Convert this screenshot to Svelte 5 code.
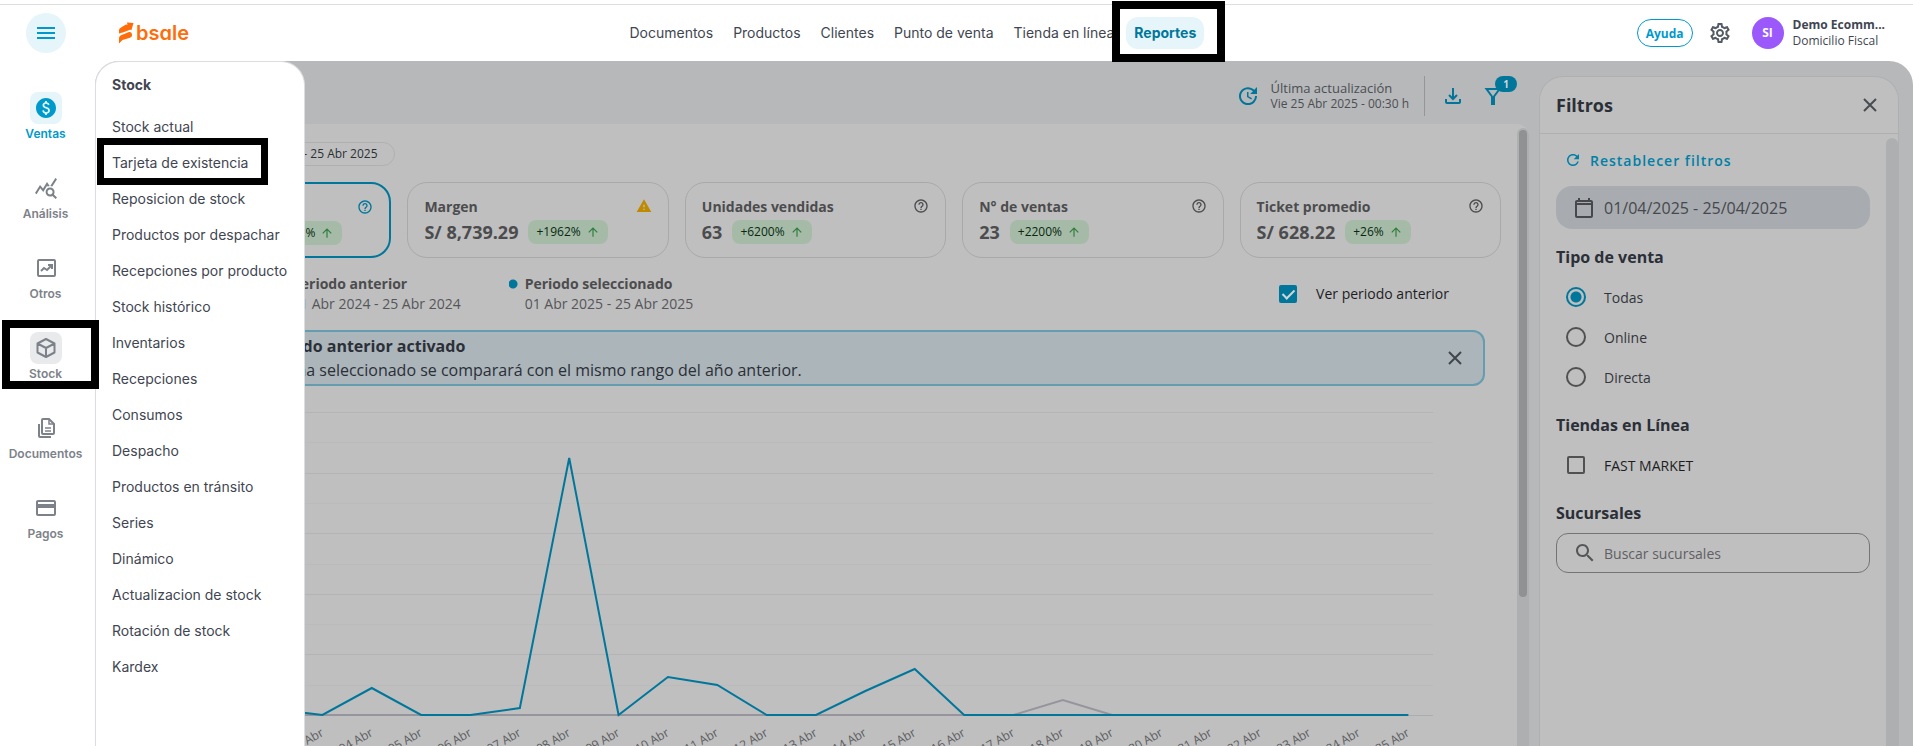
<script lang="ts">
	const navLinks = ['Documentos', 'Productos', 'Clientes', 'Punto de venta', 'Tienda en línea', 'Reportes']

	const sections = ['Ventas', 'Análisis', 'Otros', 'Stock', 'Documentos', 'Pagos']

	const stockLinks = [
		'Stock actual',
		'Tarjeta de existencia',
		'Reposicion de stock',
		'Productos por despachar',
		'Recepciones por producto',
		'Stock histórico',
		'Inventarios',
		'Recepciones',
		'Consumos',
		'Despacho',
		'Productos en tránsito',
		'Series',
		'Dinámico',
		'Actualizacion de stock',
		'Rotación de stock',
		'Kardex',
	]

	const cards = [
		{ title: 'Ventas', value: 'S/ 14,449', change: '+1962%', active: true },
		{ title: 'Margen', value: 'S/ 8,739.29', change: '+1962%', warn: true },
		{ title: 'Unidades vendidas', value: '63', change: '+6200%' },
		{ title: 'N° de ventas', value: '23', change: '+2200%' },
		{ title: 'Ticket promedio', value: 'S/ 628.22', change: '+26%' },
	]

	let saleType = $state('Todas')
	let showPrevious = $state(true)

	// chart geometry: values are pixels above the axis
	const current = [0, 6, 0, 27, 0, 0, 7, 257, 0, 38, 30, 0, 0, 24, 46, 0, 0, 0, 0, 0, 0, 0, 0, 0, 0]
	const previous = current.map((_, i) => (i === 17 ? 15 : 0))
	const AXIS_Y = 329
	const PLOT_LEFT = 69
	const PLOT_RIGHT = 68
	const gridLines = Array.from({ length: 10 }, (_, i) => Math.round(26 + i * 30.3))

	let chartWidth = $state(0)
	const step = $derived(Math.max(0, chartWidth - PLOT_LEFT - PLOT_RIGHT) / current.length)

	function px(i: number) {
		return PLOT_LEFT + step * (i + 0.5)
	}

	function points(values: number[]) {
		return values.map((v, i) => `${px(i)},${AXIS_Y - v}`).join(' ')
	}

	function dayLabel(i: number) {
		return `${String(i + 1).padStart(2, '0')} Abr`
	}
</script>

<div class="app">
	<header>
		<div class="brand">
			<button class="burger" aria-label="Menú">
				<svg width="18" height="12" viewBox="0 0 18 12"><path d="M0 1h18M0 6h18M0 11h18" stroke="currentColor" stroke-width="2" /></svg>
			</button>
			<a class="logo" href="#inicio">
				<svg width="15" height="22" viewBox="0 0 15 22" fill="currentColor">
					<path d="M7 2.5 8.5 2.8 8 .5 14.5 1 12.500 8 11 7.800 4.500 10.300 0 11.500V8Q0 6.500 2 5.500Z" />
					<path d="M1.500 13.500 10 10Q13 9.500 13 12.500V13.500Q13 15 11 15.800L3.500 18 0 21.500V16Q0 14.500 1.500 13.500Z" />
				</svg>
				<span>bsale</span>
			</a>
		</div>
		<nav class="topnav">
			{#each navLinks as link}
				<a href="#{link}" class:current={link === 'Reportes'}>
					{link}
					{#if link === 'Reportes'}<i class="mark"></i>{/if}
				</a>
			{/each}
		</nav>
		<div class="account">
			<button class="help">Ayuda</button>
			<button class="gear" aria-label="Configuración">
				<svg width="24" height="24" viewBox="0 0 24 24" fill="currentColor"><path d="M19.43 12.98c.04-.32.07-.64.07-.98 0-.34-.03-.66-.07-.98l2.110-1.650c.19-.15.24-.42.12-.64l-2-3.460c-.09-.16-.26-.25-.44-.25-.06 0-.12.01-.17.03l-2.490 1c-.52-.4-1.080-.73-1.690-.98l-.38-2.650C14.460 2.180 14.250 2 14 2h-4c-.25 0-.46.18-.49.42l-.38 2.650c-.61.25-1.170.59-1.690.98l-2.490-1c-.06-.02-.12-.03-.18-.03-.17 0-.34.09-.43.25l-2 3.460c-.13.22-.07.49.12.64l2.110 1.650c-.04.32-.07.65-.07.98 0 .33.03.66.07.98l-2.110 1.650c-.19.15-.24.42-.12.64l2 3.460c.09.16.26.25.44.25.06 0 .12-.01.17-.03l2.490-1c.52.4 1.080.73 1.690.98l.38 2.650c.03.24.24.42.49.42h4c.25 0 .46-.18.49-.42l.38-2.650c.61-.25 1.170-.59 1.690-.98l2.490 1c.06.02.12.03.18.03.17 0 .34-.09.43-.25l2-3.460c.12-.22.07-.49-.12-.64l-2.110-1.650zm-1.980-1.710c.04.31.05.52.05.73 0 .21-.02.43-.05.73l-.14 1.130.89.7 1.080.84-.7 1.210-1.270-.51-1.040-.42-.9.68c-.43.32-.84.56-1.250.73l-1.060.43-.16 1.130-.2 1.350h-1.400l-.19-1.350-.16-1.130-1.060-.43c-.43-.18-.83-.41-1.230-.71l-.91-.7-1.060.43-1.270.51-.7-1.210 1.080-.84.89-.7-.14-1.130c-.03-.31-.05-.54-.05-.74s.02-.43.05-.73l.14-1.130-.89-.7-1.080-.84.7-1.210 1.270.51 1.040.42.9-.68c.43-.32.84-.56 1.250-.73l1.060-.43.16-1.130.2-1.350h1.390l.19 1.350.16 1.130 1.060.43c.43.18.83.41 1.230.71l.91.7 1.060-.43 1.270-.51.7 1.210-1.070.85-.89.7.14 1.130zM12 8c-2.210 0-4 1.790-4 4s1.790 4 4 4 4-1.790 4-4-1.790-4-4-4zm0 6c-1.100 0-2-.9-2-2s.9-2 2-2 2 .9 2 2-.9 2-2 2z" /></svg>
			</button>
			<div class="user">
				<span class="avatar">SI</span>
				<div>
					<strong>Demo Ecomm...</strong>
					<span>Domicilio Fiscal</span>
				</div>
			</div>
		</div>
	</header>

	<div class="body">
		<nav class="sidebar">
			{#each sections as name}
				<a href="#{name}" class:on={name === 'Ventas'} class:open={name === 'Stock'}>
					<span class="tile">
						<svg width="24" height="24" viewBox="0 0 24 24" fill="currentColor">
							{#if name === 'Ventas'}
								<path d="M12 2C6.480 2 2 6.480 2 12s4.480 10 10 10 10-4.480 10-10S17.520 2 12 2zm.88 15.760V19h-1.750v-1.290c-.74-.18-2.390-.77-3.020-2.960l1.650-.67c.06.22.58 2.090 2.400 2.090.93 0 1.980-.48 1.980-1.610 0-.96-.7-1.460-2.280-2.030-1.100-.39-3.350-1.030-3.350-3.310 0-.1.01-2.400 2.620-2.960V5h1.750v1.240c1.840.32 2.510 1.790 2.660 2.230l-1.580.67c-.11-.35-.59-1.340-1.900-1.340-.7 0-1.810.37-1.810 1.390 0 .95.86 1.310 2.640 1.900 2.400.83 3.010 2.050 3.010 3.450 0 2.630-2.500 3.130-3.020 3.220z" />
							{:else if name === 'Análisis'}
								<path d="M19.880 18.470c.44-.7.7-1.510.7-2.390 0-2.490-2.010-4.500-4.500-4.500s-4.500 2.010-4.500 4.500 2.010 4.500 4.490 4.500c.88 0 1.700-.26 2.390-.7L21.580 23 23 21.580l-3.120-3.110zm-3.800.11c-1.380 0-2.500-1.120-2.500-2.500s1.120-2.500 2.500-2.500 2.500 1.120 2.500 2.500-1.120 2.500-2.500 2.500zm-.36-8.500c-.74.02-1.450.18-2.100.45l-.55-.83-3.800 6.180-3.010-3.520-3.630 5.810L1 17l5-8 3 3.500L13 6l2.720 4.080zm2.590.5c-.64-.28-1.330-.45-2.050-.49L21.380 2 23 3.180l-4.690 7.400z" />
							{:else if name === 'Otros'}
								<g fill="none" stroke="currentColor" stroke-width="2">
									<rect x="4" y="4" width="17" height="16" rx="1" />
									<path d="m7 15 3-3 3 2 4-4" />
									<path d="M14 9h4v4" />
								</g>
							{:else if name === 'Stock'}
								<path d="M12 3 20.500 7.500V16.500L12 21 3.500 16.500V7.500ZM3.500 7.500 12 12 20.500 7.500M12 12V21" fill="none" stroke="currentColor" stroke-width="2" stroke-linejoin="round" />
							{:else if name === 'Documentos'}
								<g fill="none" stroke="currentColor" stroke-width="2">
									<path d="M9 3h6l5 5v9q0 1-1 1H9q-1 0-1-1V4q0-1 1-1Z" />
									<path d="M15 3v5h5M11 12h6M11 15h6" stroke-width="1.500" />
									<path d="M5 8v12q0 1 1 1h11" />
								</g>
							{:else}
								<path d="M20 4H4c-1.110 0-1.990.89-1.990 2L2 18c0 1.110.89 2 2 2h16c1.110 0 2-.89 2-2V6c0-1.110-.89-2-2-2zm0 14H4v-6h16v6zm0-10H4V6h16v2z" />
							{/if}
						</svg>
					</span>
					{name}
					{#if name === 'Stock'}<i class="mark"></i>{/if}
				</a>
			{/each}
		</nav>

		<div class="stage">
			<main>
				<div class="toolbar">
					<svg width="24" height="24" viewBox="0 0 24 24" fill="#00769b"><path d="M21 10.120h-6.780l2.740-2.820c-2.730-2.700-7.150-2.800-9.880-.1-2.730 2.710-2.730 7.080 0 9.790s7.150 2.710 9.880 0C18.320 15.650 19 14.080 19 12.100h2c0 1.980-.88 4.550-2.640 6.290-3.510 3.480-9.210 3.480-12.720 0-3.500-3.470-3.530-9.110-.02-12.580s9.140-3.470 12.650 0L21 3v7.120zM12.500 8v4.250l3.500 2.080-.72 1.210L11 13V8h1.500z" /></svg>
					<div class="updated">
						<span>Última actualización</span>
						<small>Vie 25 Abr 2025 - 00:30 h</small>
					</div>
					<div class="tools">
						<button aria-label="Descargar">
							<svg width="24" height="24" viewBox="0 0 24 24" fill="none" stroke="currentColor" stroke-width="2"><path d="M12 4v11M8 11l4 4 4-4M5 15v3q0 1 1 1h12q1 0 1-1v-3" /></svg>
						</button>
						<button aria-label="Filtros">
							<svg width="24" height="24" viewBox="0 0 24 24" fill="none" stroke="currentColor" stroke-width="2"><path d="M5.500 5h13L13 12.500V20h-2V12.500Z" /></svg>
							<span class="count">1</span>
						</button>
					</div>
				</div>

				<div class="sheet">
					<div class="report">
						<span class="range">Fecha: 01 Abr 2025 - 25 Abr 2025</span>

						<div class="cards">
							{#each cards as card}
								<section class="card" class:active={card.active}>
									<div class="card-top">
										<h3>{card.title}</h3>
										{#if card.warn}
											<svg width="16" height="16" viewBox="0 0 24 24" fill="#bf8a00"><path d="M1 21h22L12 2 1 21zm12-3h-2v-2h2v2zm0-4h-2v-4h2v4z" /></svg>
										{:else}
											<svg width="16" height="16" viewBox="0 0 24 24" fill="currentColor"><path d="M11 18h2v-2h-2v2zm1-16C6.480 2 2 6.480 2 12s4.480 10 10 10 10-4.480 10-10S17.520 2 12 2zm0 18c-4.410 0-8-3.590-8-8s3.590-8 8-8 8 3.590 8 8-3.590 8-8 8zm0-14c-2.210 0-4 1.790-4 4h2c0-1.100.9-2 2-2s2 .9 2 2c0 2-3 1.750-3 5h2c0-2.250 3-2.500 3-5 0-2.210-1.790-4-4-4z" /></svg>
										{/if}
									</div>
									<div class="card-value">
										<strong>{card.value}</strong>
										<span class="change">
											{card.change}
											<svg width="14" height="14" viewBox="0 0 24 24" fill="#2f7d3a"><path d="M4 12l1.410 1.410L11 7.830V20h2V7.830l5.580 5.590L20 12l-8-8-8 8z" /></svg>
										</span>
									</div>
								</section>
							{/each}
						</div>

						<div class="legend">
							<div class="period previous">
								<strong>Periodo anterior</strong>
								<span>01 Abr 2024 - 25 Abr 2024</span>
							</div>
							<div class="period">
								<strong>Periodo seleccionado</strong>
								<span>01 Abr 2025 - 25 Abr 2025</span>
							</div>
							<label class="toggle">
								<input type="checkbox" bind:checked={showPrevious} />
								Ver periodo anterior
							</label>
						</div>

						<div class="notice">
							<div>
								<strong>Periodo anterior activado</strong>
								<p>La fecha seleccionado se comparará con el mismo rango del año anterior.</p>
							</div>
							<button aria-label="Cerrar aviso">
								<svg width="16" height="16" viewBox="0 0 16 16"><path d="m2 2 12 12M14 2 2 14" stroke="currentColor" stroke-width="2" /></svg>
							</button>
						</div>

						<div class="chart" bind:clientWidth={chartWidth}>
							<svg width={chartWidth} height="400">
								{#each gridLines as y, i}
									<line x1={PLOT_LEFT} x2={chartWidth - PLOT_RIGHT} y1={y + 0.5} y2={y + 0.5} stroke={i % 2 ? '#bbbbbc' : '#b4b4b6'} />
								{/each}
								<line x1={PLOT_LEFT} x2={chartWidth - PLOT_RIGHT} y1={AXIS_Y + 0.5} y2={AXIS_Y + 0.5} stroke="#adadb0" />
								{#if showPrevious}
									<polyline points={points(previous)} fill="none" stroke="#96949d" stroke-width="2" />
								{/if}
								<polyline points={points(current)} fill="none" stroke="#00769b" stroke-width="2" />
								{#each current as _, i}
									<text transform="translate({px(i) + 2} {AXIS_Y + 20}) rotate(-30)" text-anchor="end">{dayLabel(i)}</text>
								{/each}
							</svg>
						</div>
					</div>
					<div class="track"><div class="thumb"></div></div>
				</div>
			</main>

			<aside>
				<div class="filters-head">
					<h2>Filtros</h2>
					<button aria-label="Cerrar filtros">
						<svg width="16" height="16" viewBox="0 0 16 16"><path d="m2 2 12 12M14 2 2 14" stroke="currentColor" stroke-width="2" /></svg>
					</button>
				</div>
				<div class="filters-body">
					<form>
						<button type="button" class="reset">
							<svg width="18" height="18" viewBox="0 0 24 24" fill="currentColor"><path d="M17.650 6.350C16.200 4.900 14.210 4 12 4c-4.420 0-7.990 3.580-7.990 8s3.570 8 7.990 8c3.730 0 6.840-2.550 7.730-6h-2.080c-.82 2.330-3.040 4-5.650 4-3.310 0-6-2.690-6-6s2.690-6 6-6c1.660 0 3.140.69 4.220 1.780L13 11h7V4l-2.350 2.350z" /></svg>
							Restablecer filtros
						</button>
						<button type="button" class="dates">
							<svg width="24" height="24" viewBox="0 0 24 24" fill="currentColor"><path d="M19 4h-1V2h-2v2H8V2H6v2H5c-1.110 0-1.990.9-1.990 2L3 20c0 1.100.89 2 2 2h14c1.100 0 2-.9 2-2V6c0-1.100-.9-2-2-2zm0 16H5V9h14v11zm0-13H5V6h14v1z" /></svg>
							01/04/2025 - 25/04/2025
						</button>

						<fieldset>
							<legend>Tipo de venta</legend>
							{#each ['Todas', 'Online', 'Directa'] as type}
								<label>
									<input type="radio" name="tipo" value={type} bind:group={saleType} />
									{type}
								</label>
							{/each}
						</fieldset>
						<fieldset>
							<legend>Tiendas en Línea</legend>
							<label class="store">
								<input type="checkbox" />
								FAST MARKET
							</label>
						</fieldset>
						<label class="heading" for="sucursales">Sucursales</label>
						<div class="search">
							<svg width="24" height="24" viewBox="0 0 24 24" fill="currentColor"><path d="M15.500 14h-.79l-.28-.27C15.410 12.590 16 11.110 16 9.500 16 5.910 13.090 3 9.500 3S3 5.910 3 9.500 5.910 16 9.500 16c1.610 0 3.090-.59 4.230-1.570l.27.28v.79l5 4.990L20.490 19l-4.990-5zm-6 0C7.010 14 5 11.990 5 9.500S7.010 5 9.500 5 14 7.010 14 9.500 11.990 14 9.500 14z" /></svg>
							<input id="sucursales" type="text" placeholder="Buscar sucursales" />
						</div>
					</form>
					<div class="filters-track"></div>
				</div>
			</aside>

			<nav class="menu">
				<h2>Stock</h2>
				{#each stockLinks as link}
					<a href="#{link}">
						{link}
						{#if link === 'Tarjeta de existencia'}<i class="mark"></i>{/if}
					</a>
				{/each}
			</nav>
		</div>
	</div>
</div>

<style>
	:global(body) {
		background: #fff;
	}

	.app,
	.app * {
		box-sizing: border-box;
	}

	.app {
		display: flex;
		flex-direction: column;
		height: 100vh;
		padding-top: 4px;
		overflow: hidden;
		font-family: 'Open Sans', 'Noto Sans', sans-serif;
		color: #3f4652;
	}

	a {
		color: inherit;
		text-decoration: none;
	}

	button {
		display: flex;
		align-items: center;
		justify-content: center;
		padding: 0;
		border: 0;
		background: none;
		color: inherit;
		font: inherit;
		cursor: pointer;
	}

	h2,
	h3,
	p {
		margin: 0;
	}

	svg {
		flex: none;
	}

	.mark {
		position: absolute;
		z-index: 5;
		border: 8px solid #000;
		pointer-events: none;
	}

	/* top bar */
	header {
		display: flex;
		flex: none;
		align-items: center;
		justify-content: space-between;
		height: 57px;
		padding: 0 28px 0 26px;
		border-top: 1px solid #dedede;
		font-family: Inter, sans-serif;
		font-size: 14px;
	}

	.brand,
	.account,
	.user,
	.logo {
		display: flex;
		align-items: center;
	}

	.burger {
		width: 40px;
		height: 40px;
		margin-right: 53px;
		border-radius: 50%;
		background: #e5f5fa;
		color: #0099cc;
	}

	.logo {
		gap: 2px;
		color: #ff6d0a;
		font-size: 20px;
		font-weight: 600;
		font-feature-settings: 'cv11';
	}

	.topnav {
		display: flex;
		gap: 4px;
	}

	.topnav a {
		position: relative;
		padding: 0 8px;
		border-radius: 12px;
		line-height: 32px;
		white-space: nowrap;
	}

	.topnav .current {
		background: #e5f5fa;
		color: #00769b;
		font-weight: 700;
	}

	.topnav .mark {
		inset: -16px -21px -13px -14px;
	}

	.help {
		height: 28px;
		margin-right: 15px;
		padding: 0 8px;
		border: 1px solid #0099cc;
		border-radius: 14px;
		color: #0099cc;
		font-family: 'Open Sans', sans-serif;
		font-size: 12px;
		font-weight: 700;
	}

	.gear {
		margin-right: 20px;
		color: #545b66;
	}

	.user {
		gap: 9px;
		font-family: 'Open Sans', sans-serif;
		font-size: 12px;
		line-height: 16px;
	}

	.user strong,
	.user div span {
		display: block;
	}

	.avatar {
		width: 32px;
		border-radius: 50%;
		background: #9b59fb;
		color: #fff;
		font-weight: 700;
		line-height: 32px;
		text-align: center;
	}

	/* left rail */
	.body {
		display: flex;
		flex: 1;
		min-height: 0;
	}

	.sidebar {
		display: flex;
		flex: none;
		flex-direction: column;
		gap: 28px;
		width: 95px;
		padding: 31px 4px 0 0;
		font-family: Inter, sans-serif;
		font-size: 12px;
		font-weight: 600;
		line-height: 20px;
		color: #7d828a;
	}

	.sidebar a {
		position: relative;
		display: flex;
		flex-direction: column;
		align-items: center;
	}

	.tile {
		display: flex;
		align-items: center;
		justify-content: center;
		width: 32px;
		height: 32px;
		border-radius: 8px;
	}

	.sidebar .on {
		color: #0099cc;
	}

	.on .tile {
		background: #e5f5fa;
	}

	.open .tile {
		background: #e9eaeb;
	}

	.sidebar .mark {
		inset: -12px -8px -5px 2px;
	}

	/* stock submenu, over the report */
	.stage {
		position: relative;
		display: flex;
		flex: 1;
		min-width: 0;
		border-radius: 24px 24px 0 0;
		background: #b7b8ba;
	}

	.menu {
		position: absolute;
		z-index: 2;
		top: 0;
		bottom: 0;
		left: 0;
		width: 210px;
		padding: 11px 0 0 16px;
		border: 1px solid #dcdde0;
		border-bottom: 0;
		border-radius: 24px 24px 0 0;
		background: #fff;
		font-family: Inter, sans-serif;
		font-size: 14px;
	}

	.menu h2 {
		margin-bottom: 12px;
		font-size: 14px;
		font-weight: 700;
		line-height: 24px;
	}

	.menu a {
		position: relative;
		display: block;
		line-height: 36px;
		white-space: nowrap;
	}

	.menu .mark {
		inset: -7px 36px -4px -15px;
		border-width: 7px;
	}

	/* report */
	main {
		display: flex;
		flex: 1;
		flex-direction: column;
		min-width: 0;
	}

	.toolbar {
		display: flex;
		flex: none;
		align-items: center;
		justify-content: flex-end;
		height: 63px;
		padding: 6px 24px 0 0;
		color: #4b4e53;
	}

	.updated {
		display: flex;
		flex-direction: column;
		margin: 0 15px 0 11px;
		font-size: 13px;
		line-height: 16px;
	}

	.updated small {
		font-size: 12px;
	}

	.tools {
		display: flex;
		align-items: center;
		gap: 16px;
		height: 40px;
		padding-left: 16px;
		border-left: 1px solid #94969a;
		color: #00769b;
	}

	.tools button {
		position: relative;
	}

	.count {
		position: absolute;
		top: -8px;
		left: 14px;
		width: 22px;
		border-radius: 8px;
		background: #00769b;
		color: #d0d5d8;
		font-size: 10px;
		font-weight: 700;
		line-height: 16px;
	}

	.sheet {
		display: flex;
		flex: 1;
		min-height: 0;
		overflow: hidden;
		border-radius: 12px 12px 0 0;
		background: #bfbfbf;
	}

	.report {
		flex: 1;
		min-width: 0;
		padding: 18px 16px 0 35px;
		overflow: hidden;
	}

	.track {
		flex: none;
		width: 12px;
		margin-top: 4px;
		padding: 2px;
		border-radius: 6px 6px 0 0;
		background: #adafb1;
	}

	.thumb {
		height: 76%;
		border-radius: 4px;
		background: #909193;
	}

	.range {
		display: block;
		width: fit-content;
		height: 24px;
		margin: 0 0 16px 47px;
		padding: 0 16px;
		border: 1px solid #aeb0b2;
		border-radius: 12px;
		color: #2b2f36;
		font-size: 12px;
		line-height: 22px;
	}

	.cards {
		display: grid;
		grid-template-columns: repeat(5, 1fr);
		gap: 16px;
	}

	.card {
		height: 76px;
		padding: 13px 16px;
		border: 1px solid #a9a9aa;
		border-radius: 20px;
		color: #4c4c4e;
	}

	.card.active {
		border: 2px solid #00769b;
		color: #00769b;
	}

	.card-top {
		display: flex;
		align-items: center;
		justify-content: space-between;
		height: 20px;
	}

	.card h3 {
		font-size: 14px;
		font-weight: 700;
	}

	.card-value {
		display: flex;
		align-items: center;
		gap: 10px;
		height: 32px;
	}

	.card-value strong {
		font-size: 18px;
		line-height: 24px;
	}

	.active .card-value {
		justify-content: flex-end;
		padding-right: 31px;
	}

	.change {
		display: flex;
		align-items: center;
		gap: 5px;
		padding: 0 8px;
		border-radius: 8px;
		background: #a5bba8;
		color: #09280f;
		font-size: 12px;
		line-height: 24px;
	}

	.legend {
		display: flex;
		align-items: center;
		gap: 48px;
		padding: 16px 52px 16px 146px;
		font-size: 14px;
		line-height: 20px;
		color: #55565a;
	}

	.period {
		display: grid;
		padding-left: 16px;
		background: radial-gradient(circle at 4px 10px, #00769b 4px, transparent 5px);
	}

	.period.previous {
		background: radial-gradient(circle at 4px 10px, #96949d 4px, transparent 5px);
	}

	.period strong {
		color: #4c4c4e;
	}

	.toggle {
		display: flex;
		align-items: center;
		gap: 19px;
		margin-left: auto;
		color: #1d1d1f;
	}

	input[type='checkbox'] {
		flex: none;
		width: 18px;
		height: 18px;
		margin: 0;
		border: 2px solid #515151;
		border-radius: 2px;
		appearance: none;
	}

	input[type='checkbox']:checked {
		border-color: #00769b;
		background: #00769b;
	}

	input[type='checkbox']:checked::after {
		content: '';
		display: block;
		width: 5px;
		height: 10px;
		margin: 0 auto;
		border: solid #d0d5d8;
		border-width: 0 2px 2px 0;
		transform: rotate(45deg);
	}

	.notice {
		display: flex;
		align-items: center;
		justify-content: space-between;
		height: 56px;
		margin-right: 16px;
		padding: 0 20px 0 121px;
		border: 2px solid #659cb0;
		border-radius: 12px;
		background: #abb5ba;
		color: #2b2f38;
		font-size: 16px;
		line-height: 24px;
	}

	.notice strong {
		padding-left: 8px;
	}

	.notice button {
		color: #42474d;
	}

	.chart {
		height: 400px;
	}

	.chart svg {
		display: block;
	}

	.chart line {
		shape-rendering: crispEdges;
	}

	.chart text {
		fill: #5a5c60;
		font-size: 12px;
	}

	/* filters */
	aside {
		display: flex;
		flex: none;
		flex-direction: column;
		width: 360px;
		margin: 15px 14px 0 10px;
		border: 1px solid #afb0b2;
		border-bottom: 0;
		border-radius: 24px 24px 0 0;
		background: #bfbfbf;
		overflow: hidden;
		color: #2b2f38;
	}

	.filters-head {
		display: flex;
		flex: none;
		align-items: center;
		justify-content: space-between;
		height: 57px;
		padding: 0 20px 0 16px;
		border-bottom: 1px solid #aeb0b2;
	}

	.filters-head h2 {
		font-size: 18px;
	}

	.filters-head button {
		color: #484b50;
	}

	.filters-body {
		display: flex;
		flex: 1;
	}

	form {
		flex: 1;
		padding: 12px 16px 0;
	}

	.filters-track {
		width: 12px;
		margin-top: 4px;
		border-radius: 6px 6px 0 0;
		background: #adafb1;
	}

	.reset {
		gap: 8px;
		height: 28px;
		margin: 0 0 12px 8px;
		color: #007fa7;
		font-size: 14px;
		font-weight: 600;
		letter-spacing: 1px;
	}

	.dates {
		justify-content: flex-start;
		gap: 8px;
		width: 100%;
		height: 43px;
		margin-bottom: 16px;
		padding: 0 16px;
		border-radius: 16px;
		background: #a8acb0;
		color: #46484c;
		font-size: 16px;
	}

	fieldset {
		margin: 0;
		padding: 0;
		border: 0;
	}

	legend,
	.heading {
		display: block;
		padding: 0;
		font-size: 16px;
		font-weight: 700;
		line-height: 24px;
	}

	legend {
		margin-bottom: 8px;
	}

	fieldset label {
		display: flex;
		align-items: center;
		gap: 18px;
		height: 40px;
		padding-left: 10px;
		color: #33363c;
		font-size: 14px;
	}

	fieldset + fieldset,
	.heading {
		margin-top: 16px;
	}

	fieldset .store {
		gap: 19px;
		padding-left: 11px;
		color: #1d1d1f;
	}

	input[type='radio'] {
		width: 20px;
		height: 20px;
		margin: 0;
		border: 2px solid #515151;
		border-radius: 50%;
		appearance: none;
	}

	input[type='radio']:checked {
		border-color: #00769b;
		background: radial-gradient(circle, #00769b 5px, transparent 6px);
	}

	.search {
		display: flex;
		align-items: center;
		gap: 7px;
		height: 40px;
		margin-top: 8px;
		padding: 0 16px;
		border: 1px solid #747476;
		border-radius: 12px;
		color: #55565a;
	}

	.search input {
		flex: 1;
		min-width: 0;
		padding: 0;
		border: 0;
		background: none;
		font: inherit;
		font-size: 14px;
	}

	.search input::placeholder {
		color: #5f6063;
	}
</style>
